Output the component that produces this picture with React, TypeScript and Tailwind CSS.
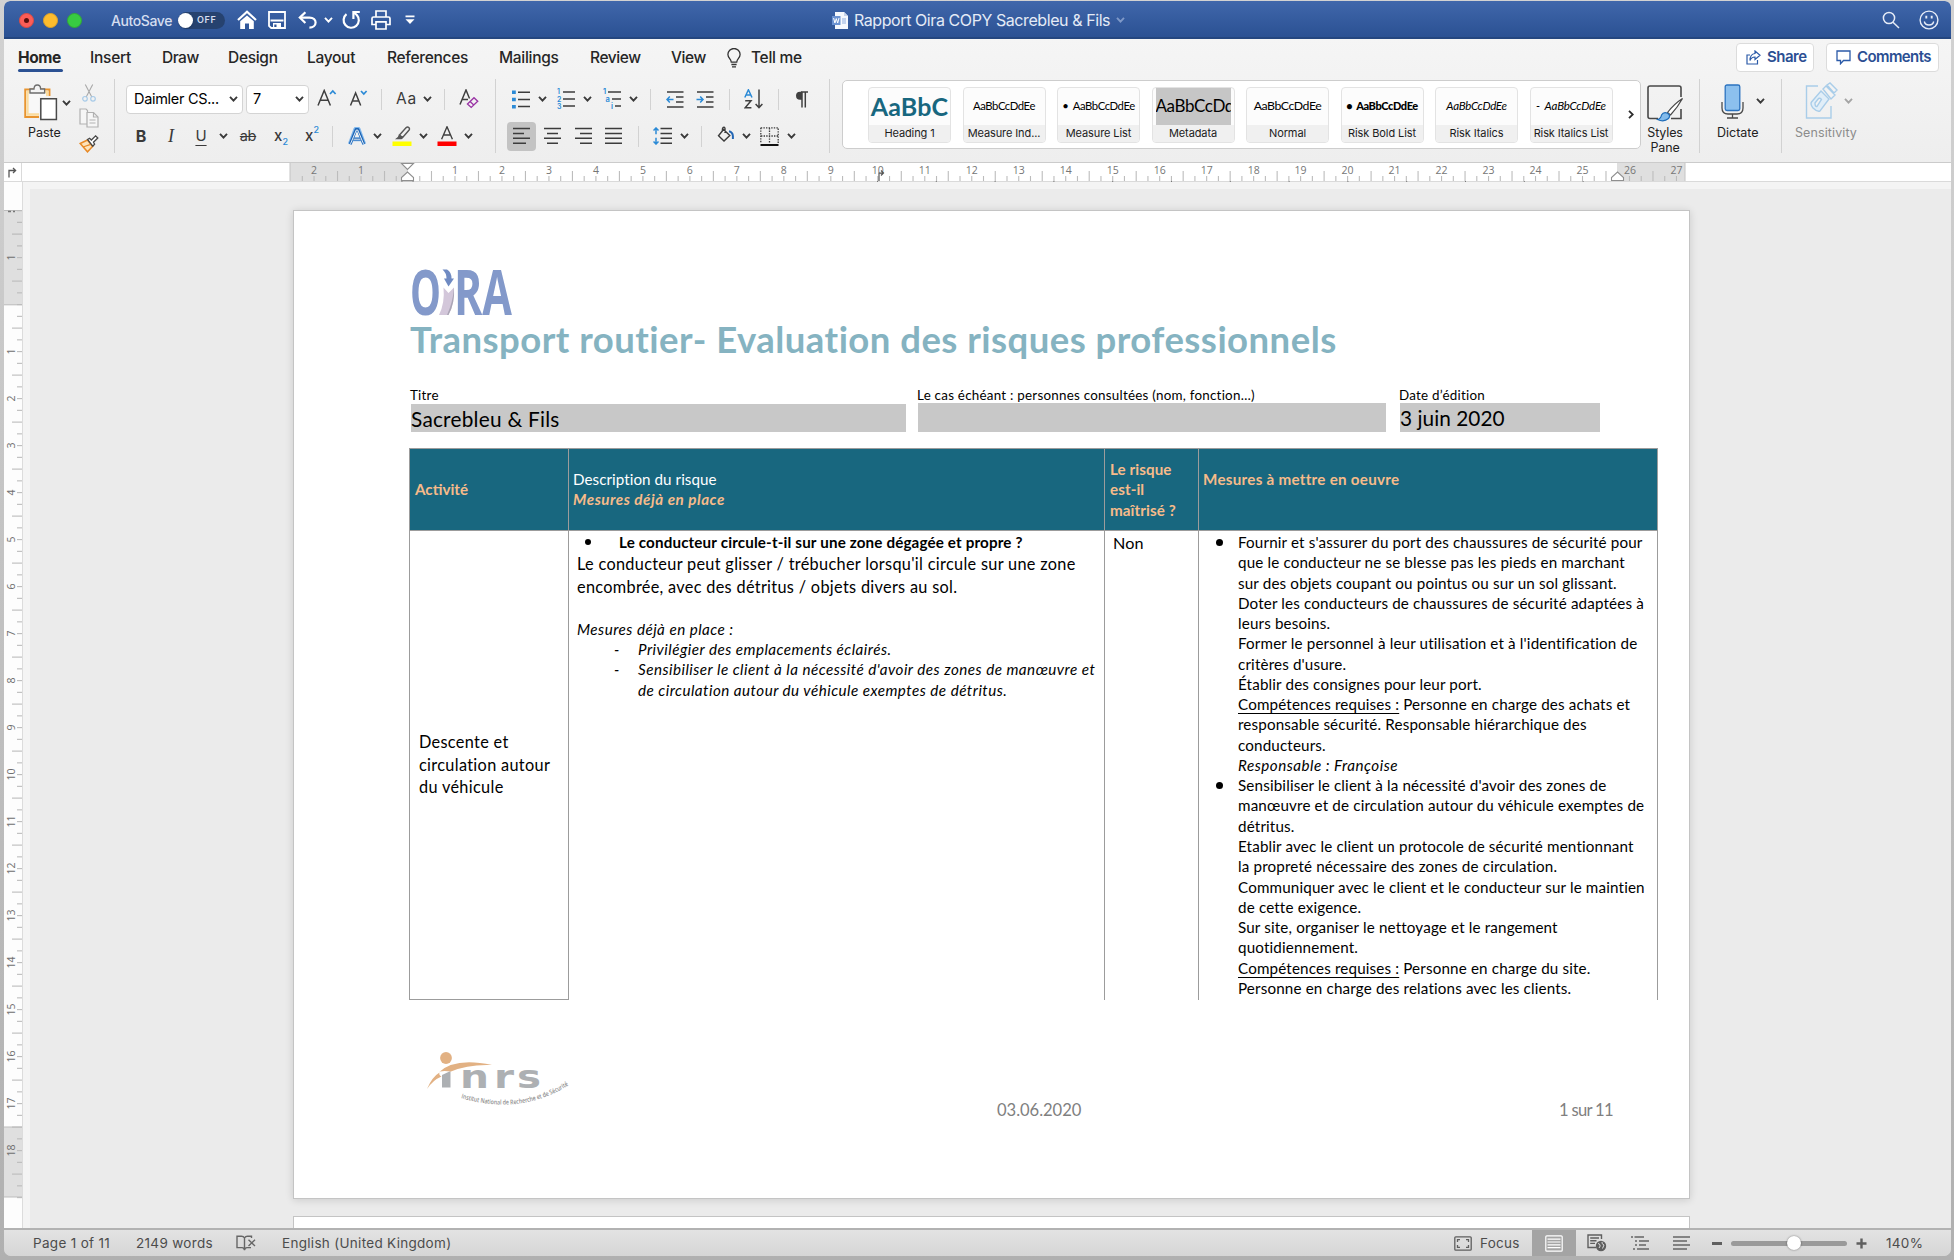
import React from "react";

const UI = "font-['Inter','Liberation_Sans',sans-serif]";
const DOC = "font-['Lato','Open_Sans',sans-serif]";

function Chevron({ className = "", color = "#3a3a3a" }: { className?: string; color?: string }) {
  return (
    <svg className={`h-[6px] w-[9px] shrink-0 ${className}`} viewBox="0 0 9 6" fill="none" stroke={color} strokeWidth="1.9">
      <path d="M1 0.8 L4.5 4.6 L8 0.8" />
    </svg>
  );
}

function Divider({ className = "" }: { className?: string }) {
  return <div className={`w-px shrink-0 bg-[#d2d2d2] ${className}`} />;
}

function Lines({ rows, className = "", w = 18 }: { rows: [number, number][]; className?: string; w?: number }) {
  return (
    <svg className={`h-[18px] shrink-0 ${className}`} width={w} viewBox={`0 0 ${w} 18`} stroke="#3c3c3c" strokeWidth="1.5">
      {rows.map(([a, b], i) => (
        <path key={i} d={`M${a} ${1.5 + i * 4.9} H${b}`} />
      ))}
    </svg>
  );
}

function TitleBar() {
  return (
    <div className={`flex h-[38px] shrink-0 items-center rounded-t-[6px] border-b-2 border-[#24467f] bg-gradient-to-b from-[#4067ab] to-[#2b5193] pt-[2px] ${UI}`}>
      <div className="flex w-[828px] shrink-0 items-center">
        <div className="ml-[15px] flex gap-[9px]">
          <div className="flex size-[15px] items-center justify-center rounded-full border border-[#dd4a43] bg-[#fc5d57]">
            <div className="size-[5px] rounded-full bg-[#5a0f0d]" />
          </div>
          <div className="size-[15px] rounded-full border border-[#e0a327] bg-[#fdbc2e]" />
          <div className="size-[15px] rounded-full border border-[#31a935] bg-[#38cb42]" />
        </div>
        <span className="ml-[29px] w-[67px] text-[14px] font-medium tracking-[-0.4px] text-[#d5def0]">AutoSave</span>
        <div className="flex h-[17px] w-[47px] items-center rounded-full bg-[#26426f]">
          <div className="size-[15px] rounded-full bg-white shadow" />
          <span className="ml-[4px] text-[9px] font-semibold tracking-[0.6px] text-[#d5def0]">OFF</span>
        </div>
        <svg className="ml-[12px] h-[20px] w-[20px]" viewBox="0 0 20 20" fill="none" stroke="white" strokeWidth="2.2">
          <path d="M1 10 L10 1.8 L19 10" />
          <path d="M3.2 11.3 L10 5.6 L16.8 11.3 V19 H12 V13.5 H8 V19 H3.2 Z" fill="white" stroke="none" />
        </svg>
        <svg className="ml-[11px] h-[18px] w-[18px]" viewBox="0 0 18 18">
          <path d="M1 1 H17 V17 H3.2 L1 14.8 Z" fill="none" stroke="white" strokeWidth="1.8" />
          <path d="M2.5 9.5 H15.5" stroke="white" strokeWidth="1.8" />
          <path d="M5 12 H13 V17 H5 Z" fill="white" />
          <path d="M6.3 13.5 H8.5 V16 H6.3 Z" fill="#2f5597" />
        </svg>
        <svg className="ml-[12px] h-[18px] w-[19px]" viewBox="0 0 19 18" fill="none" stroke="white" strokeWidth="2.2">
          <path d="M7.4 1.2 L1.8 6.6 L7.4 12" />
          <path d="M2 6.6 H11.5 C15.5 6.6 17.6 9 17.6 11.6 C17.6 14.6 15 16.6 11.4 16.6" />
        </svg>
        <Chevron className="ml-[7px]" color="white" />
        <svg className="ml-[9px] h-[20px] w-[19px]" viewBox="0 0 19 20" fill="none" stroke="white" strokeWidth="2.2">
          <path d="M4.5 4.2 A7.6 7.6 0 1 0 14.8 5 L12 2.6" />
          <path d="M17.8 2 H11.4 V9" />
        </svg>
        <svg className="ml-[10px] h-[20px] w-[20px]" viewBox="0 0 20 20" fill="none" stroke="white" strokeWidth="1.7">
          <path d="M5 7 V1 H15 V7" />
          <path d="M5 14.5 H1 V8.5 Q1 7 2.5 7 H17.5 Q19 7 19 8.5 V14.5 H15" />
          <path d="M5 11.8 H15 V19 H5 Z" />
        </svg>
        <svg className="ml-[14px] h-[10px] w-[10px]" viewBox="0 0 10 10" fill="white">
          <path d="M0.5 0.5 H9.5 V2.2 H0.5 Z" />
          <path d="M0.5 4.2 H9.5 L5 9 Z" />
        </svg>
      </div>
      <svg className="h-[17px] w-[16px] shrink-0" viewBox="0 0 16 17">
        <path d="M3 0 H12 L16 4 V17 H3 Z" fill="#f5f8fd" />
        <path d="M12 0 V4 H16" fill="#c7d4ea" />
        <path d="M0 4 H8.5 V13 H0 Z" fill="#6c93d2" />
        <path d="M1.6 6 L2.9 11 L4.3 6.6 L5.7 11 L7 6" fill="none" stroke="white" strokeWidth="1" />
        <path d="M10 7 H14 M10 9 H14 M10 11 H14" stroke="#8fadde" />
      </svg>
      <span className="ml-[6px] w-[258px] whitespace-nowrap text-[16px] tracking-[-0.42px] text-[#e4ebf6]">Rapport Oira COPY Sacrebleu &amp; Fils</span>
      <Chevron className="ml-[4px]" color="#7f99c8" />
      <svg className="ml-auto h-[18px] w-[18px]" viewBox="0 0 18 18" fill="none" stroke="#e6ecf7" strokeWidth="1.5">
        <circle cx="7" cy="7" r="5.6" />
        <path d="M11 11.2 L17 17" />
      </svg>
      <svg className="ml-[19px] mr-[12px] h-[20px] w-[20px]" viewBox="0 0 20 20" fill="none" stroke="#e6ecf7" strokeWidth="1.4">
        <circle cx="10" cy="10" r="8.9" />
        <path d="M5.3 11.5 Q6 15 10 15 Q14 15 14.7 11.5" />
        <path d="M7.3 5.8 V8.6 M12.7 5.8 V8.6" strokeWidth="1.9" />
      </svg>
    </div>
  );
}

function Tabs() {
  return (
    <div className={`flex h-[36px] shrink-0 items-center pl-[14px] pt-px text-[15.5px] font-medium text-[#262626] ${UI}`}>
      <div className="w-[72px]">
        <div className="relative w-[45px] whitespace-nowrap font-bold tracking-[-0.4px]">
          Home
          <div className="absolute -bottom-[3px] left-0 h-[3px] w-[45px] rounded-full bg-[#2b5193]" />
        </div>
      </div>
      <div className="w-[72px] tracking-[-0.25px]">Insert</div>
      <div className="w-[66px] tracking-[-0.5px]">Draw</div>
      <div className="w-[79px] tracking-[-0.3px]">Design</div>
      <div className="w-[80px] tracking-[-0.3px]">Layout</div>
      <div className="w-[112px] tracking-[-0.3px]">References</div>
      <div className="w-[91px] tracking-[-0.3px]">Mailings</div>
      <div className="w-[81px] tracking-[-0.4px]">Review</div>
      <div className="w-[56px] tracking-[-0.4px]">View</div>
      <svg className="h-[20px] w-[14px]" viewBox="0 0 14 20" fill="none" stroke="#333" strokeWidth="1.3">
        <path d="M4.3 14.2 C4.3 11 0.9 10.3 0.9 6.6 A6 6 0 0 1 13.1 6.6 C13.1 10.3 9.7 11 9.7 14.2 Z" />
        <path d="M4.4 16.5 H9.6 M5 18.9 H9" />
      </svg>
      <div className="ml-[10px] whitespace-nowrap tracking-[-0.3px]">Tell me</div>
      <div className="ml-auto mr-[12px] flex gap-[12px] text-[15px] font-semibold text-[#2b4f93]">
        <div className="flex h-[29px] w-[78px] items-center rounded-[4px] border border-[#dcdcdc] bg-white pl-[9px]">
          <svg className="h-[15px] w-[15px]" viewBox="0 0 15 15" fill="none" stroke="#2b5aa8" strokeWidth="1.2">
            <path d="M4 5 H1 V14 H11.5 V10" />
            <path d="M9 1 L14 5.2 L9 9.4 V7 C6.5 7 5 8 4 10.6 C4 6.5 5.6 3.8 9 3.5 Z" />
          </svg>
          <span className="ml-[6px] tracking-[-0.5px]">Share</span>
        </div>
        <div className="flex h-[29px] w-[113px] items-center rounded-[4px] border border-[#dcdcdc] bg-white pl-[9px]">
          <svg className="h-[15px] w-[15px]" viewBox="0 0 15 15" fill="none" stroke="#2b5aa8" strokeWidth="1.3">
            <path d="M1 1 H14 V10.5 H7.5 L4.5 13.8 V10.5 H1 Z" />
          </svg>
          <span className="ml-[6px] tracking-[-0.6px]">Comments</span>
        </div>
      </div>
    </div>
  );
}

function ClipboardGroup() {
  return (
    <div className="flex w-[110px] shrink-0">
      <div className="ml-[16px] flex w-[52px] flex-col">
        <div className="flex items-center pt-[5px]">
          <svg className="ml-[4px] h-[37px] w-[34px] shrink-0" viewBox="0 0 34 37" fill="none">
            <path d="M15 33 H1.2 V5.5 H25.5 V12" stroke="#e8942f" strokeWidth="1.9" />
            <path d="M15 30.5 H3.6 V8 H23 V12" stroke="#fbdc9e" strokeWidth="2.4" />
            <path d="M4.8 9 H22 V13 H15 V29 H4.8 Z" fill="#f8f8f8" />
            <path d="M6 9 V5 H10 Q10 1 13.3 1 Q16.6 1 16.6 5 H20.6 V9 Z" fill="#f3f3f3" stroke="#6c6c6c" strokeWidth="1.3" />
            <path d="M16.8 14.8 H32.4 V35.6 H16.8 Z" fill="white" stroke="#494949" strokeWidth="1.5" />
          </svg>
        </div>
        <span className="ml-[8px] mt-[4px] text-[12.5px] leading-[15px] text-[#222]">Paste</span>
      </div>
      <Chevron className="-ml-[10px] mt-[21px]" />
      <div className="ml-[8px] flex flex-col items-center">
        <svg className="mt-[5px] h-[18px] w-[14px]" viewBox="0 0 14 18" fill="none">
          <path d="M3.3 0.5 L9.8 13 M10.7 0.5 L4.2 13" stroke="#a9a9a9" strokeWidth="1.1" />
          <circle cx="3" cy="14.8" r="2.3" stroke="#a8cbe8" strokeWidth="1.2" />
          <circle cx="11" cy="14.8" r="2.3" stroke="#a8cbe8" strokeWidth="1.2" />
        </svg>
        <svg className="mt-[6px] h-[20px] w-[20px]" viewBox="0 0 20 20" fill="#f6f6f6" stroke="#b1b1b1" strokeWidth="1.2">
          <path d="M1 1 H7 L8.5 2.5 V16 H1 Z" />
          <path d="M8 4.5 H14.5 L19 9 V19 H8 Z" />
          <path d="M14.5 4.5 V9 H19 M10.5 12 H16.5 M10.5 15 H16.5" fill="none" />
        </svg>
        <svg className="mt-[7px] h-[18px] w-[20px]" viewBox="0 0 20 18" fill="none">
          <path d="M1.2 8.5 L8.5 5 L13.5 11.5 L8.5 16.8 Z" fill="#fde3bb" stroke="#e88a26" strokeWidth="1.5" />
          <path d="M4 12 L11 9.6" stroke="#e88a26" strokeWidth="1.2" />
          <path d="M8.5 4.5 L10.6 3.2 L12.4 5 L16.6 0.9 L18.8 3 L14.5 7.2 L15.6 9.2 L13.8 11.2 Z" fill="white" stroke="#484848" strokeWidth="1.3" />
        </svg>
      </div>
    </div>
  );
}

function FontGroup() {
  return (
    <div className="ml-[11px] flex w-[369px] shrink-0 flex-col text-[#3a3a3a]">
      <div className="mt-[5px] flex h-[30px] items-center">
        <div className="flex h-[29px] w-[117px] shrink-0 items-center justify-between rounded-[4px] border border-[#d4d4d4] bg-white pl-[7px] pr-[4px] text-[14.5px] tracking-[-0.3px] text-black">
          Daimler CS...
          <Chevron />
        </div>
        <div className="ml-[3px] flex h-[29px] w-[63px] shrink-0 items-center justify-between rounded-[4px] border border-[#d4d4d4] bg-white pl-[6px] pr-[4px] text-[14.5px] text-black">
          7
          <Chevron />
        </div>
        <svg className="ml-[8px] h-[20px] w-[20px] shrink-0" viewBox="0 0 20 20" fill="none">
          <path d="M1 16.5 L7.2 1.5 L13.4 16.5 M3.2 11.3 H11.2" stroke="#404040" strokeWidth="1.5" />
          <path d="M13 5 L15.8 2 L18.6 5" stroke="#2b8ad6" strokeWidth="1.7" />
        </svg>
        <svg className="ml-[12px] h-[20px] w-[20px] shrink-0" viewBox="0 0 20 20" fill="none">
          <path d="M1.5 16.5 L6.6 4 L11.7 16.5 M3.4 12 H9.8" stroke="#404040" strokeWidth="1.5" />
          <path d="M12 2 L14.8 5 L17.6 2" stroke="#2b8ad6" strokeWidth="1.7" />
        </svg>
        <Divider className="ml-[12px] h-[21px]" />
        <span className="ml-[14px] w-[22px] text-[15.5px] tracking-[0.8px]">Aa</span>
        <Chevron className="ml-[5px]" />
        <Divider className="ml-[12px] h-[21px]" />
        <svg className="ml-[14px] h-[20px] w-[20px] shrink-0" viewBox="0 0 20 20" fill="none">
          <path d="M1 15.5 L7 1 L10.5 9.5 M3.2 10.5 H9" stroke="#404040" strokeWidth="1.5" />
          <path d="M8.5 15 L15 8.7 L18.7 12.2 L12.2 18.4 Z M11 12.6 L14.8 16" stroke="#9a35a5" strokeWidth="1.4" />
        </svg>
      </div>
      <div className="mt-[7px] flex h-[30px] items-center">
        <div className="flex w-[30px] justify-center text-[16px] font-bold">B</div>
        <div className="flex w-[30px] justify-center font-['Liberation_Serif',serif] text-[18px] italic">I</div>
        <div className="flex w-[30px] justify-center text-[15px] underline underline-offset-[4px]">U</div>
        <Chevron className="ml-[3px]" />
        <div className="ml-[3px] flex w-[34px] justify-center">
          <span className="px-px text-[14.5px] tracking-[-0.3px] line-through">ab</span>
        </div>
        <div className="flex w-[32px] items-center justify-center text-[15px] font-medium">
          x<span className="mt-[12px] text-[9px] text-[#2b8ad6]">2</span>
        </div>
        <div className="flex w-[30px] items-center justify-center text-[15px] font-medium">
          x<span className="mb-[12px] text-[9px] text-[#2b8ad6]">2</span>
        </div>
        <Divider className="ml-[5px] h-[21px]" />
        <svg className="ml-[15px] h-[19px] w-[18px] shrink-0" viewBox="0 0 18 19" fill="none" strokeLinejoin="round">
          <path d="M1.8 17.2 L7.5 2 H10.5 L16.2 17.2 M4.8 12.2 H13.2" stroke="#80b7ec" strokeWidth="4" />
          <path d="M2.2 17 L8 2.5 H10 L15.8 17 M5.2 12.2 H12.8" stroke="#1c64b4" strokeWidth="2.8" />
          <path d="M2.5 16.8 L8.3 3 H9.7 L15.5 16.8 M5.5 12.2 H12.5" stroke="white" strokeWidth="0.9" />
        </svg>
        <Chevron className="ml-[7px]" />
        <svg className="ml-[10px] h-[20px] w-[20px] shrink-0" viewBox="0 0 20 20" fill="none">
          <path d="M7.5 9 L14.2 1.6 Q15.6 0.4 17 1.7 Q18 3 16.9 4.3 L10.6 11.5 Z" stroke="#565656" strokeWidth="1.4" />
          <path d="M7 8.4 L11 12 L9.5 13.3 H3 L5.8 11 Z" fill="#565656" />
          <path d="M0.5 15.5 H19.5 V20 H0.5 Z" fill="#ffff00" />
        </svg>
        <Chevron className="ml-[7px]" />
        <svg className="ml-[9px] h-[20px] w-[20px] shrink-0" viewBox="0 0 20 20" fill="none">
          <path d="M4.6 13.3 L10 0.8 L15.4 13.3 M6.5 9 H13.5" stroke="#404040" strokeWidth="1.4" />
          <path d="M0.5 15.5 H19.5 V20 H0.5 Z" fill="#ff0000" />
        </svg>
        <Chevron className="ml-[7px]" />
      </div>
    </div>
  );
}

function ParagraphGroup() {
  return (
    <div className="flex w-[333px] shrink-0 flex-col">
      <div className="mt-[5px] flex h-[30px] items-center">
        <svg className="ml-[16px] h-[19px] w-[18px] shrink-0" viewBox="0 0 18 19">
          <path d="M6 2.2 H18 M6 9.5 H18 M6 16.6 H18" stroke="#3c3c3c" strokeWidth="1.5" />
          <path d="M0 0.5 H3.8 V4 H0 Z M0 7.7 H3.8 V11.2 H0 Z M0 14.9 H3.8 V18.4 H0 Z" fill="#2b8ad6" />
        </svg>
        <Chevron className="ml-[8px]" />
        <svg className="ml-[10px] h-[20px] w-[18px] shrink-0 overflow-visible" viewBox="0 0 18 20">
          <path d="M6 3 H18 M6 10 H18 M6 17 H18" stroke="#3c3c3c" strokeWidth="1.5" />
          <g fill="#2b8ad6" fontFamily="Inter" fontSize="7" fontWeight="600">
            <text x="0" y="5.3">1</text>
            <text x="0" y="12.6">2</text>
            <text x="0" y="19.6">3</text>
          </g>
        </svg>
        <Chevron className="ml-[8px]" />
        <svg className="ml-[11px] h-[20px] w-[18px] shrink-0 overflow-visible" viewBox="0 0 18 20">
          <path d="M5 3 H18 M9 10 H18 M12 17 H18" stroke="#3c3c3c" strokeWidth="1.5" />
          <g fill="#2b8ad6" fontFamily="Inter" fontSize="7.5" fontWeight="600">
            <text x="0" y="5.4">1</text>
            <text x="2.6" y="12.8">a</text>
            <text x="8" y="19.6">i</text>
          </g>
        </svg>
        <Chevron className="ml-[8px]" />
        <Divider className="ml-[12px] h-[21px]" />
        <svg className="ml-[15px] h-[17px] w-[18px] shrink-0" viewBox="0 0 18 17" fill="none" stroke="#3c3c3c" strokeWidth="1.5">
          <path d="M1 1 H17.5 M10 6 H17.5 M10 11 H17.5 M1 16 H17.5" />
          <path d="M7.5 8.5 H1 M3.8 5.6 L1 8.5 L3.8 11.4" stroke="#2b8ad6" />
        </svg>
        <svg className="ml-[12px] h-[17px] w-[18px] shrink-0" viewBox="0 0 18 17" fill="none" stroke="#3c3c3c" strokeWidth="1.5">
          <path d="M1 1 H17.5 M10 6 H17.5 M10 11 H17.5 M1 16 H17.5" />
          <path d="M0.5 8.5 H7 M4.2 5.6 L7 8.5 L4.2 11.4" stroke="#2b8ad6" />
        </svg>
        <Divider className="ml-[15px] h-[21px]" />
        <svg className="ml-[14px] h-[20px] w-[20px] shrink-0" viewBox="0 0 20 20" fill="none" strokeWidth="1.5">
          <path d="M0.8 8.5 L4.4 0.8 L8 8.5 M2 6 H6.8" stroke="#2b8ad6" />
          <path d="M1.2 11.8 H7 L1.2 18.8 H7.4" stroke="#404040" />
          <path d="M15 0.5 V18.5 M11.6 15 L15 18.6 L18.4 15" stroke="#404040" />
        </svg>
        <Divider className="ml-[14px] h-[21px]" />
        <svg className="ml-[16px] h-[17px] w-[13px] shrink-0" viewBox="0 0 13 17" fill="none" stroke="#404040" strokeWidth="1.5">
          <path d="M7 1 V16.5 M10.3 1 V16.5 M13 1 H6" />
          <path d="M7 0.8 H5 A4 4 0 0 0 5 8.8 H7 Z" fill="#404040" stroke="none" />
        </svg>
      </div>
      <div className="mt-[7px] flex h-[30px] items-center">
        <div className="ml-[11px] flex h-[29px] w-[29px] shrink-0 items-center justify-center rounded-[4px] bg-[#c3c3c3]">
          <Lines rows={[[0, 17], [0, 11], [0, 17], [0, 13]]} />
        </div>
        <Lines className="ml-[8px]" w={17} rows={[[0, 17], [3, 14], [0, 17], [3, 14]]} />
        <Lines className="ml-[14px]" w={17} rows={[[0, 17], [5, 17], [0, 17], [5, 17]]} />
        <Lines className="ml-[13px]" w={17} rows={[[0, 17], [0, 17], [0, 17], [0, 17]]} />
        <Divider className="ml-[16px] h-[21px]" />
        <svg className="ml-[14px] h-[18px] w-[19px] shrink-0" viewBox="0 0 19 18" fill="none" strokeWidth="1.5">
          <path d="M7.5 1.5 H19 M7.5 6.4 H19 M7.5 11.3 H19 M7.5 16.2 H19" stroke="#3c3c3c" />
          <path d="M3 1 V7.3 M0.5 3.6 L3 1 L5.5 3.6 M3 10.7 V17 M0.5 14.4 L3 17 L5.5 14.4" stroke="#2b8ad6" />
        </svg>
        <Chevron className="ml-[8px]" />
        <Divider className="ml-[12px] h-[21px]" />
        <svg className="ml-[15px] h-[20px] w-[18px] shrink-0" viewBox="0 0 18 20" fill="none">
          <path d="M6.5 3.5 L12.8 9.5 L7 15 L1.5 9.8 Z M8 7 V2.5 Q7.8 0.8 6.3 1.4 Q5.3 2 5.3 4.5" stroke="#3c3c3c" strokeWidth="1.4" />
          <path d="M12 5.2 Q15.6 6 15.9 10 V13" stroke="#2467b5" strokeWidth="2" />
        </svg>
        <Chevron className="ml-[7px]" />
        <svg className="ml-[9px] h-[19px] w-[19px] shrink-0" viewBox="0 0 19 19" fill="none" stroke="#3c3c3c">
          <path d="M0.8 0.8 H18.2 V16 M0.8 0.8 V16 M9.5 1 V16 M1 9 H18" strokeWidth="1.3" strokeDasharray="1.4 1.2" />
          <path d="M0.5 18 H18.5" strokeWidth="1.9" stroke="#111" />
        </svg>
        <Chevron className="ml-[8px]" />
      </div>
    </div>
  );
}

const STYLES: { label: string; sample: string; cls: string; box?: string }[] = [
  { label: "Heading 1", sample: "AaBbC", cls: "text-[25px] font-bold text-[#18677f] tracking-[0.2px]" },
  { label: "Measure Ind...", sample: "AaBbCcDdEe", cls: "text-[11.3px] tracking-[-0.45px]" },
  { label: "Measure List", sample: "•  AaBbCcDdEe", cls: "text-[11.3px] tracking-[-0.45px]" },
  { label: "Metadata", sample: "AaBbCcDdEe", cls: "text-[17px] tracking-[-0.4px]", box: "bg-[#c6c6c6] mx-[3px]" },
  { label: "Normal", sample: "AaBbCcDdEe", cls: "text-[12.3px] tracking-[-0.45px]" },
  { label: "Risk Bold List", sample: "•  AaBbCcDdEe", cls: "text-[11px] font-black tracking-[-0.4px]" },
  { label: "Risk Italics", sample: "AaBbCcDdEe", cls: "text-[11.5px] italic tracking-[-0.3px]" },
  { label: "Risk Italics List", sample: "-  AaBbCcDdEe", cls: "text-[11.5px] italic tracking-[-0.2px]" },
];

function StyleGallery() {
  return (
    <div className="ml-[12px] mt-[1px] flex h-[69px] w-[799px] shrink-0 items-center rounded-[5px] border-[1.5px] border-[#cdcdcd] bg-white pl-[25px]">
      <div className="flex gap-[11.5px]">
        {STYLES.map((s) => (
          <div key={s.label} className="flex h-[56px] w-[83px] flex-col overflow-hidden rounded-[4px] border border-[#e3e3e3] bg-[#fcfcfc]">
            <div className={`flex h-[37px] shrink-0 items-center overflow-hidden whitespace-pre text-black ${DOC} ${s.box ?? "justify-center"}`}>
              <span className={`leading-[30px] ${s.cls}`}>{s.sample}</span>
            </div>
            <div className="flex flex-1 items-center justify-center whitespace-nowrap bg-[#f0f0f0] text-[11px] tracking-[-0.1px] text-[#1c1c1c]">{s.label}</div>
          </div>
        ))}
      </div>
      <svg className="ml-[15px] h-[9px] w-[6px] shrink-0" viewBox="0 0 6 9" fill="none" stroke="#2c2c2c" strokeWidth="1.8">
        <path d="M1 0.8 L4.8 4.5 L1 8.2" />
      </svg>
    </div>
  );
}

function Ribbon() {
  return (
    <div className={`flex h-[88px] shrink-0 pt-[4px] ${UI}`}>
      <ClipboardGroup />
      <Divider className="h-[74px]" />
      <FontGroup />
      <Divider className="h-[74px]" />
      <ParagraphGroup />
      <Divider className="h-[74px]" />
      <StyleGallery />
      <div className="ml-[2px] flex w-[44px] shrink-0 flex-col items-center text-center text-[12.5px] leading-[14.5px] text-[#222]">
        <svg className="mt-[6px] h-[37px] w-[37px] shrink-0" viewBox="0 0 37 37" fill="none">
          <path d="M11 33.5 H3 Q1 33.5 1 31.5 V3 Q1 1 3 1 H32 Q34 1 34 3 V12 M34 24 V33.5 H24" stroke="#484848" strokeWidth="1.6" />
          <path d="M35.5 13.5 Q27 19 20.5 27.5 L23.5 30 Q30.5 22.5 35.5 13.5 Z" fill="white" stroke="#484848" strokeWidth="1.2" />
          <path d="M10.5 34.5 Q14 33.5 14.5 30 Q16.5 26.5 20.5 28.2 Q24 30.5 21.5 33.5 Q17 37.5 10.5 34.5 Z" fill="#83bbeb" stroke="#1f6db8" strokeWidth="1.2" />
        </svg>
        <div className="mt-[4px] tracking-[-0.15px]">Styles<br />Pane</div>
      </div>
      <Divider className="ml-[12px] h-[74px]" />
      <div className="flex w-[81px] shrink-0 flex-col text-[12.5px] leading-[15px] text-[#222]">
        <div className="flex items-center">
          <svg className="ml-[21px] mt-[5px] h-[36px] w-[23px] shrink-0" viewBox="0 0 23 36" fill="none" stroke="#4a4a4a" strokeWidth="1.3">
            <rect x="4.2" y="1" width="14.6" height="25.5" rx="1.8" fill="#8cc0ee" stroke="#2b73c0" />
            <path d="M1 18 V24 Q1 30 7 30 H16 Q22 30 22 24 V18 M11.5 30 V34 M6 34 H17" />
          </svg>
          <Chevron className="ml-[12px] mt-[3px]" />
        </div>
        <span className="ml-[17px] mt-[5px] tracking-[0px]">Dictate</span>
      </div>
      <Divider className="h-[74px]" />
      <div className="flex shrink-0 flex-col text-[12.5px] leading-[15px] text-[#8c8c8c]">
        <div className="flex items-center">
          <svg className="ml-[23px] mt-[5px] h-[36px] w-[33px] shrink-0 overflow-visible" viewBox="0 0 33 36" fill="none" stroke="#a9cde9" strokeWidth="1.4">
            <path d="M13 2 H1.5 V34 H26 V22" />
            <path d="M16 7 L24 15 L15 27 Q12 28 8 24 Q5 20 6.5 18 Z" fill="#e1eef8" />
            <path d="M10 19 L13.5 14.5 Q15.5 13.5 16.5 15.5 L12 22.5 Q10 23 10 19 Z M18 5 L21 2 L30 11 L26 15 Z M22 1 L25 -1 L32 6 L29 9 Z" fill="#f3f3f3" />
          </svg>
          <Chevron className="ml-[6px] mt-[3px]" color="#a5a5a5" />
        </div>
        <span className="ml-[13px] mt-[5px] tracking-[0.1px]">Sensitivity</span>
      </div>
    </div>
  );
}

const CM = 46.98;

function HorizontalRuler() {
  const zero = 386;
  const ticks: number[] = [];
  for (let q = -9; q <= 108; q++) ticks.push(q);
  return (
    <svg className="h-[26px] w-[1929px] shrink-0" viewBox="0 0 1929 26">
      <rect width="1929" height="19" fill="#ffffff" />
      <rect x="268" width="118" height="19" fill="#dfdfdf" />
      <rect x="1595" width="68" height="19" fill="#dfdfdf" />
      <path d="M268 0 V19 M1663 0 V19" stroke="#c4c4c4" />
      <path d="M0 18.5 H1929" stroke="#dadada" />
      {ticks.map((q) => {
        const x = zero + (q * CM) / 4;
        const long = q % 2 === 0 && q % 4 !== 0;
        return <path key={q} d={`M${x} ${long ? 8 : 13} V18`} stroke="#bcbcbc" strokeWidth="1.1" />;
      })}
      <g fill="#767676" fontFamily="Open Sans" fontSize="10.5" textAnchor="middle">
        {[-2, -1, ...Array.from({ length: 27 }, (_, i) => i + 1)].map((n) => (
          <text key={n} x={zero + n * CM + (n === 26 ? 0.5 : 0)} y="10.6">{Math.abs(n)}</text>
        ))}
      </g>
      {Array.from({ length: 13 }, (_, i) => (
        <path key={i} d={`M${855.5 + i * 58.8} 18 V22.5`} stroke="#777" />
      ))}
      <path d="M857 18 V10 H861 M859 7.5 L861.5 10 L859 12.5" stroke="#555" fill="none" strokeWidth="1.2" />
      <g fill="white" stroke="#8f8f8f" strokeWidth="1.1">
        <path d="M379.5 0.5 H391.5 L385.5 6.5 Z" />
        <path d="M379.5 17.5 V14.5 L385.5 9 L391.5 14.5 V17.5 Z" />
        <rect x="379.5" y="18" width="12" height="6.5" rx="1.5" />
        <path d="M1589.5 17.5 V14.5 L1595.5 9 L1601.5 14.5 V17.5 Z" />
      </g>
    </svg>
  );
}

function VerticalRuler() {
  const zero = 122.6;
  const ticks: number[] = [];
  for (let q = -8; q <= 76; q++) ticks.push(q);
  return (
    <svg className="h-[1046px] w-[19px] shrink-0" viewBox="0 0 19 1046">
      <rect width="19" height="1046" fill="#fdfdfd" />
      <rect y="28" width="19" height="95" fill="#dfdfdf" />
      <rect y="945" width="19" height="70" fill="#dfdfdf" />
      <path d="M0 28.5 H19 M0 122.8 H19 M0 945 H19 M0 1015 H19" stroke="#bdbdbd" />
      {ticks.map((q) => {
        const y = zero + (q * 47) / 4;
        const long = q % 2 === 0 && q % 4 !== 0;
        return <path key={q} d={`M${long ? 8 : 13} ${y} H18`} stroke="#bcbcbc" strokeWidth="1.1" />;
      })}
      <g fill="#6f6f6f" fontFamily="Open Sans" fontSize="10.5" textAnchor="middle">
        {[-1, ...Array.from({ length: 18 }, (_, i) => i + 1)].map((n) => (
          <text key={n} transform={`translate(11 ${zero + n * 47}) rotate(-90)`}>{Math.abs(n)}</text>
        ))}
      </g>
      <path d="M4 29.5 H7 M9 29.5 H11" stroke="#777" strokeWidth="1.5" />
      <path d="M18.5 0 V1046" stroke="#dcdcdc" />
    </svg>
  );
}

function OiraLogo() {
  return (
    <svg className="ml-[117px] h-[47px] w-[101px] shrink-0 overflow-visible" viewBox="0 0 101 47">
      <g fill="#8399ca" fontFamily="Open Sans" fontWeight="700" fontSize="62">
        <text x="-1" y="45.5" textLength="31" lengthAdjust="spacingAndGlyphs">O</text>
        <text x="43" y="45.5" textLength="58" lengthAdjust="spacingAndGlyphs">RA</text>
      </g>
      <path d="M31.5 0.5 H36 Q40.5 3 40.5 9.5 H43 L37.5 17.5 L33 9.5 H35.5 Q35.5 4 31.5 0.5 Z" fill="#6f8ac2" />
      <path d="M32.5 18.5 L37.5 24 L43 18.5 Q44 34 37.5 46 H28 Q34 34 32.5 18.5 Z" fill="#d3c7da" />
      <path d="M43 18.5 Q44 34 37.5 46 H36 Q42 33 43 18.5 Z" fill="#aaa5b5" />
    </svg>
  );
}

function InrsLogo() {
  return (
    <svg className="-mt-[1px] h-[56px] w-[148px] shrink-0 overflow-visible" viewBox="0 0 148 56">
      <g fill="#adb0b3" fontFamily="DejaVu Sans" fontWeight="bold" fontSize="32">
        <text x="34" y="35.5" textLength="29" lengthAdjust="spacingAndGlyphs">n</text>
        <text x="68" y="35.5" textLength="20" lengthAdjust="spacingAndGlyphs">r</text>
        <text x="91" y="35.5" textLength="24" lengthAdjust="spacingAndGlyphs">s</text>
      </g>
      <path d="M16 23 L24.5 19 V35.5 H16 Z" fill="#adb0b3" />
      <circle cx="20" cy="6" r="5.9" fill="#e2b183" />
      <path d="M12 21 Q28 5 66 13 Q42 12 25 19.5 Q14 18 12 21 Z" fill="#e2b183" />
      <path d="M13.5 20.5 Q6 25 1 37 Q7 28 15.5 24.5 Q12.5 23 13.5 20.5 Z" fill="#e2b183" />
      <path id="inrs-arc" d="M35 46 Q94 64 143 33" fill="none" />
      <text fill="#8c8c8c" fontFamily="Open Sans" fontSize="6.6" fontWeight="600">
        <textPath href="#inrs-arc" textLength="112" lengthAdjust="spacingAndGlyphs">Institut National de Recherche et de Sécurité</textPath>
      </text>
    </svg>
  );
}

const MEASURES: React.ReactNode[][] = [
  [
    "Fournir et s'assurer du port des chaussures de sécurité pour",
    "que le conducteur ne se blesse pas les pieds en marchant",
    "sur des objets coupant ou pointus ou sur un sol glissant.",
    "Doter les conducteurs de chaussures de sécurité adaptées à",
    "leurs besoins.",
    "Former le personnel à leur utilisation et à l'identification de",
    "critères d'usure.",
    "Établir des consignes pour leur port.",
    <><u className="underline-offset-[3px]">Compétences requises :</u> Personne en charge des achats et</>,
    "responsable sécurité. Responsable hiérarchique des",
    "conducteurs.",
    <i className="tracking-[0.5px]">Responsable : Françoise</i>,
  ],
  [
    "Sensibiliser le client à la nécessité d'avoir des zones de",
    "manœuvre et de circulation autour du véhicule exemptes de",
    "détritus.",
    "Etablir avec le client un protocole de sécurité mentionnant",
    "la propreté nécessaire des zones de circulation.",
    "Communiquer avec le client et le conducteur sur le maintien",
    "de cette exigence.",
    "Sur site, organiser le nettoyage et le rangement",
    "quotidiennement.",
    <><u className="underline-offset-[3px]">Compétences requises :</u> Personne en charge du site.</>,
    "Personne en charge des relations avec les clients.",
  ],
];

function RiskTable() {
  return (
    <div className="ml-[115px] mt-[16px] w-[1249px] text-[15.2px] leading-[20.26px] text-black">
      <div className="grid h-[83px] grid-cols-[159px_536px_94px_460px] border-y border-[#9c9c9c] bg-[#18677f] font-bold text-[#f6bb8a]">
        <div className="flex items-center border-l border-[#9c9c9c] pl-[5px]">Activité</div>
        <div className="border-l border-[#9c9c9c] pl-[4px] pt-[20px]">
          <div className="font-normal tracking-[0.05px] text-white">Description du risque</div>
          <div className="italic tracking-[0.55px]">Mesures déjà en place</div>
        </div>
        <div className="border-l border-[#9c9c9c] pl-[5px] pt-[10px] tracking-[0.08px]">Le risque<br />est-il<br />maîtrisé ?</div>
        <div className="border-x border-[#9c9c9c] pl-[4px] pt-[20px] tracking-[0.27px]">Mesures à mettre en oeuvre</div>
      </div>
      <div className="grid h-[469px] grid-cols-[159px_536px_94px_460px] whitespace-nowrap">
        <div className="flex items-center border-b border-l border-[#9c9c9c] pl-[9px] text-[16.3px] leading-[22.5px] tracking-[0.32px]">
          <div>Descente et<br />circulation autour<br />du véhicule</div>
        </div>
        <div className="border-l border-[#9c9c9c] pl-[8px] pt-[1px]">
          <div className="flex font-bold tracking-[0.15px]">
            <span className="flex w-[42px] items-center pl-[8px]"><span className="size-[6px] rounded-full bg-black" /></span>
            Le conducteur circule-t-il sur une zone dégagée et propre ?
          </div>
          <div className="mt-[1px] text-[16.3px] leading-[22.3px] tracking-[0.31px]">
            Le conducteur peut glisser / trébucher lorsqu'il circule sur une zone<br />
            encombrée, avec des détritus / objets divers au sol.
          </div>
          <div className="mt-[21px] italic tracking-[0.48px]">
            <div>Mesures déjà en place :</div>
            <div className="flex"><span className="w-[61px] pl-[37px]">-</span>Privilégier des emplacements éclairés.</div>
            <div className="flex">
              <span className="w-[61px] pl-[37px]">-</span>
              <div>Sensibiliser le client à la nécessité d'avoir des zones de manœuvre et<br />de circulation autour du véhicule exemptes de détritus.</div>
            </div>
          </div>
        </div>
        <div className="border-l border-[#9c9c9c] pl-[8px] pt-[2px] text-[16.2px] tracking-[0.15px]">Non</div>
        <div className="border-x border-[#9c9c9c] pt-[1px] tracking-[0.155px]">
          {MEASURES.map((group, i) => (
            <div key={i} className="flex">
              <div className="flex h-[20.26px] w-[39px] items-center pl-[17px]"><span className="mt-px size-[7px] rounded-full bg-black" /></div>
              <div>
                {group.map((line, j) => (
                  <div key={j}>{line}</div>
                ))}
              </div>
            </div>
          ))}
        </div>
      </div>
    </div>
  );
}

function Page() {
  return (
    <div className={`flex h-[989px] w-[1397px] shrink-0 flex-col border border-[#c4c4c4] bg-white pt-[58px] shadow-[0_1px_8px_rgba(0,0,0,0.14)] ${DOC}`}>
      <OiraLogo />
      <div className="ml-[116px] mt-px whitespace-nowrap text-[36.5px] font-bold leading-[44px] tracking-[0.47px] text-[#85b3c1]">
        Transport routier- Evaluation des risques professionnels
      </div>
      <div className="ml-[116px] mt-[26px] flex text-[13.4px] leading-[16px] tracking-[0.24px] text-black">
        <div className="w-[507px]">
          <div>Titre</div>
          <div className="ml-[1px] mt-[1px] h-[28px] w-[495px] bg-[#c8c8c8] text-[20.8px] leading-[29px]">Sacrebleu &amp; Fils</div>
        </div>
        <div className="w-[482px] whitespace-nowrap">
          <div>Le cas échéant : personnes consultées (nom, fonction…)</div>
          <div className="ml-[1px] h-[29px] w-[468px] bg-[#c8c8c8]" />
        </div>
        <div>
          <div>Date d’édition</div>
          <div className="ml-[1px] h-[29px] w-[200px] bg-[#c8c8c8] text-[20.8px] leading-[30px] tracking-[0.05px]">3 juin 2020</div>
        </div>
      </div>
      <RiskTable />
      <div className="ml-[132px] mt-[53px] flex text-[16.6px] leading-[20px] text-[#808080]">
        <InrsLogo />
        <div className="ml-[423px] mt-[47px] w-[562px] tracking-[-0.05px]">03.06.2020</div>
        <div className="mt-[47px] whitespace-nowrap tracking-[-0.7px]">1 sur 11</div>
      </div>
    </div>
  );
}

function StatusBar() {
  return (
    <div className={`flex h-[28px] shrink-0 items-center rounded-b-[7px] border-t-2 border-[#b2b2b2] bg-gradient-to-b from-[#e3e3e3] to-[#d6d6d6] text-[13.5px] text-[#4c4c4c] ${UI}`}>
      <span className="ml-[29px] w-[103px] whitespace-nowrap tracking-[0.32px]">Page 1 of 11</span>
      <span className="w-[100px] whitespace-nowrap tracking-[0.32px]">2149 words</span>
      <svg className="h-[16px] w-[20px]" viewBox="0 0 20 16" fill="none" stroke="#666" strokeWidth="1.4">
        <path d="M8.5 14.5 V3 Q7.5 1.2 5.5 1.2 H1 V12.6 H6 Q8 12.6 8.5 15 Q9 12.6 11 12.6 H15 M8.5 3 Q9.5 1.2 11.5 1.2 H15.5 V3" />
        <path d="M12.5 4.8 L19 11 M19 4.8 L12.5 11" />
      </svg>
      <span className="ml-[26px] whitespace-nowrap tracking-[0.3px]">English (United Kingdom)</span>
      <svg className="ml-auto h-[15px] w-[18px]" viewBox="0 0 18 15" fill="none" stroke="#5f5f5f" strokeWidth="1.3">
        <rect x="0.8" y="0.8" width="16.4" height="13.4" rx="1" />
        <path d="M3.5 6 V3.6 H6 M12 3.6 H14.5 V6 M14.5 9 V11.4 H12 M6 11.4 H3.5 V9" />
      </svg>
      <span className="ml-[8px] w-[52px] tracking-[0.25px]">Focus</span>
      <div className="flex h-[26px] w-[44px] items-center justify-center bg-[#a4a4a4]">
        <svg className="h-[17px] w-[18px]" viewBox="0 0 18 17" fill="none" stroke="white" strokeWidth="1.2">
          <rect x="0.8" y="0.8" width="16.4" height="15.4" rx="1" />
          <path d="M2.5 4.2 H15.5 M2.5 7 H15.5 M2.5 9.8 H15.5 M2.5 12.7 H15.5" />
        </svg>
      </div>
      <svg className="ml-[11px] h-[18px] w-[20px]" viewBox="0 0 20 18" fill="none" stroke="#5f5f5f" strokeWidth="1.4">
        <path d="M9 13.5 H1 V1 H14.5 V5 M3.2 4 H12 M3.2 6.7 H9.5 M3.2 9.4 H8" />
        <circle cx="14" cy="12" r="5.2" fill="#5f5f5f" stroke="none" />
        <path d="M11 9.5 Q13 9.5 13.2 12 L12 14 M15 8 Q14.5 10 17 11 L15.5 14.5" stroke="#dcdcdc" strokeWidth="1" />
      </svg>
      <svg className="ml-[24px] h-[14px] w-[18px]" viewBox="0 0 18 14" fill="none" stroke="#666" strokeWidth="1.4">
        <path d="M0 1 H2 M3.5 1 H13 M4 5 H6 M8 5 H18 M4 9 H6 M8 9 H15 M2 13 H4 M6 13 H18" />
      </svg>
      <svg className="ml-[24px] h-[14px] w-[17px]" viewBox="0 0 17 14" fill="none" stroke="#666" strokeWidth="1.5">
        <path d="M0 1 H17 M0 5 H14 M0 9 H17 M0 13 H14" />
      </svg>
      <div className="ml-[22px] h-[3px] w-[10px] bg-[#5f5f5f]" />
      <div className="ml-[9px] flex h-[5px] w-[116px] items-center rounded-full bg-[#9a9a9a]">
        <div className="ml-[56px] size-[14px] rounded-full bg-white shadow-[0_0_2px_rgba(0,0,0,0.5)]" />
      </div>
      <svg className="ml-[9px] h-[11px] w-[11px]" viewBox="0 0 11 11" stroke="#5f5f5f" strokeWidth="2.4">
        <path d="M0.5 5.5 H10.5 M5.5 0.5 V10.5" />
      </svg>
      <span className="ml-[19px] mr-[27px] w-[38px] whitespace-nowrap tracking-[0.3px]">140%</span>
    </div>
  );
}

export default function App() {
  return (
    <div className="flex h-[1260px] w-[1954px] flex-col overflow-hidden bg-gradient-to-b from-[#d2d2d2] to-[#b0b0b0] pb-[4px] pl-[4px] pr-[3px] pt-px">
      <div className="flex min-h-0 flex-1 flex-col overflow-hidden rounded-b-[7px] rounded-t-[6px] bg-[#d8d8d8]">
        <TitleBar />
        <div className="flex h-[124px] shrink-0 flex-col border-b border-[#cbcbcb] bg-gradient-to-b from-[#f5f5f5] to-[#eeeeee]">
          <Tabs />
          <Ribbon />
        </div>
        <div className="flex h-[19px] shrink-0 bg-white">
          <div className="flex h-[19px] w-[18px] shrink-0 items-center justify-center border-b border-r border-[#dadada]">
            <svg className="h-[11px] w-[9px]" viewBox="0 0 9 11" fill="none" stroke="#555" strokeWidth="1.3">
              <path d="M1 10.5 V3.5 H7.5 M5 1 L7.6 3.5 L5 6" />
            </svg>
          </div>
          <HorizontalRuler />
        </div>
        <div className="flex min-h-0 flex-1">
          <VerticalRuler />
          <div className="flex min-w-0 flex-1 border-l-[7px] border-t-[7px] border-[#f4f4f4] bg-[#ebebeb]">
            <div className="ml-[263px] mt-[21px] flex h-[1020px] flex-col gap-[17px] overflow-visible">
              <Page />
              <div className="h-[40px] w-[1397px] shrink-0 border border-[#c4c4c4] bg-white" />
            </div>
          </div>
        </div>
        <StatusBar />
      </div>
    </div>
  );
}
